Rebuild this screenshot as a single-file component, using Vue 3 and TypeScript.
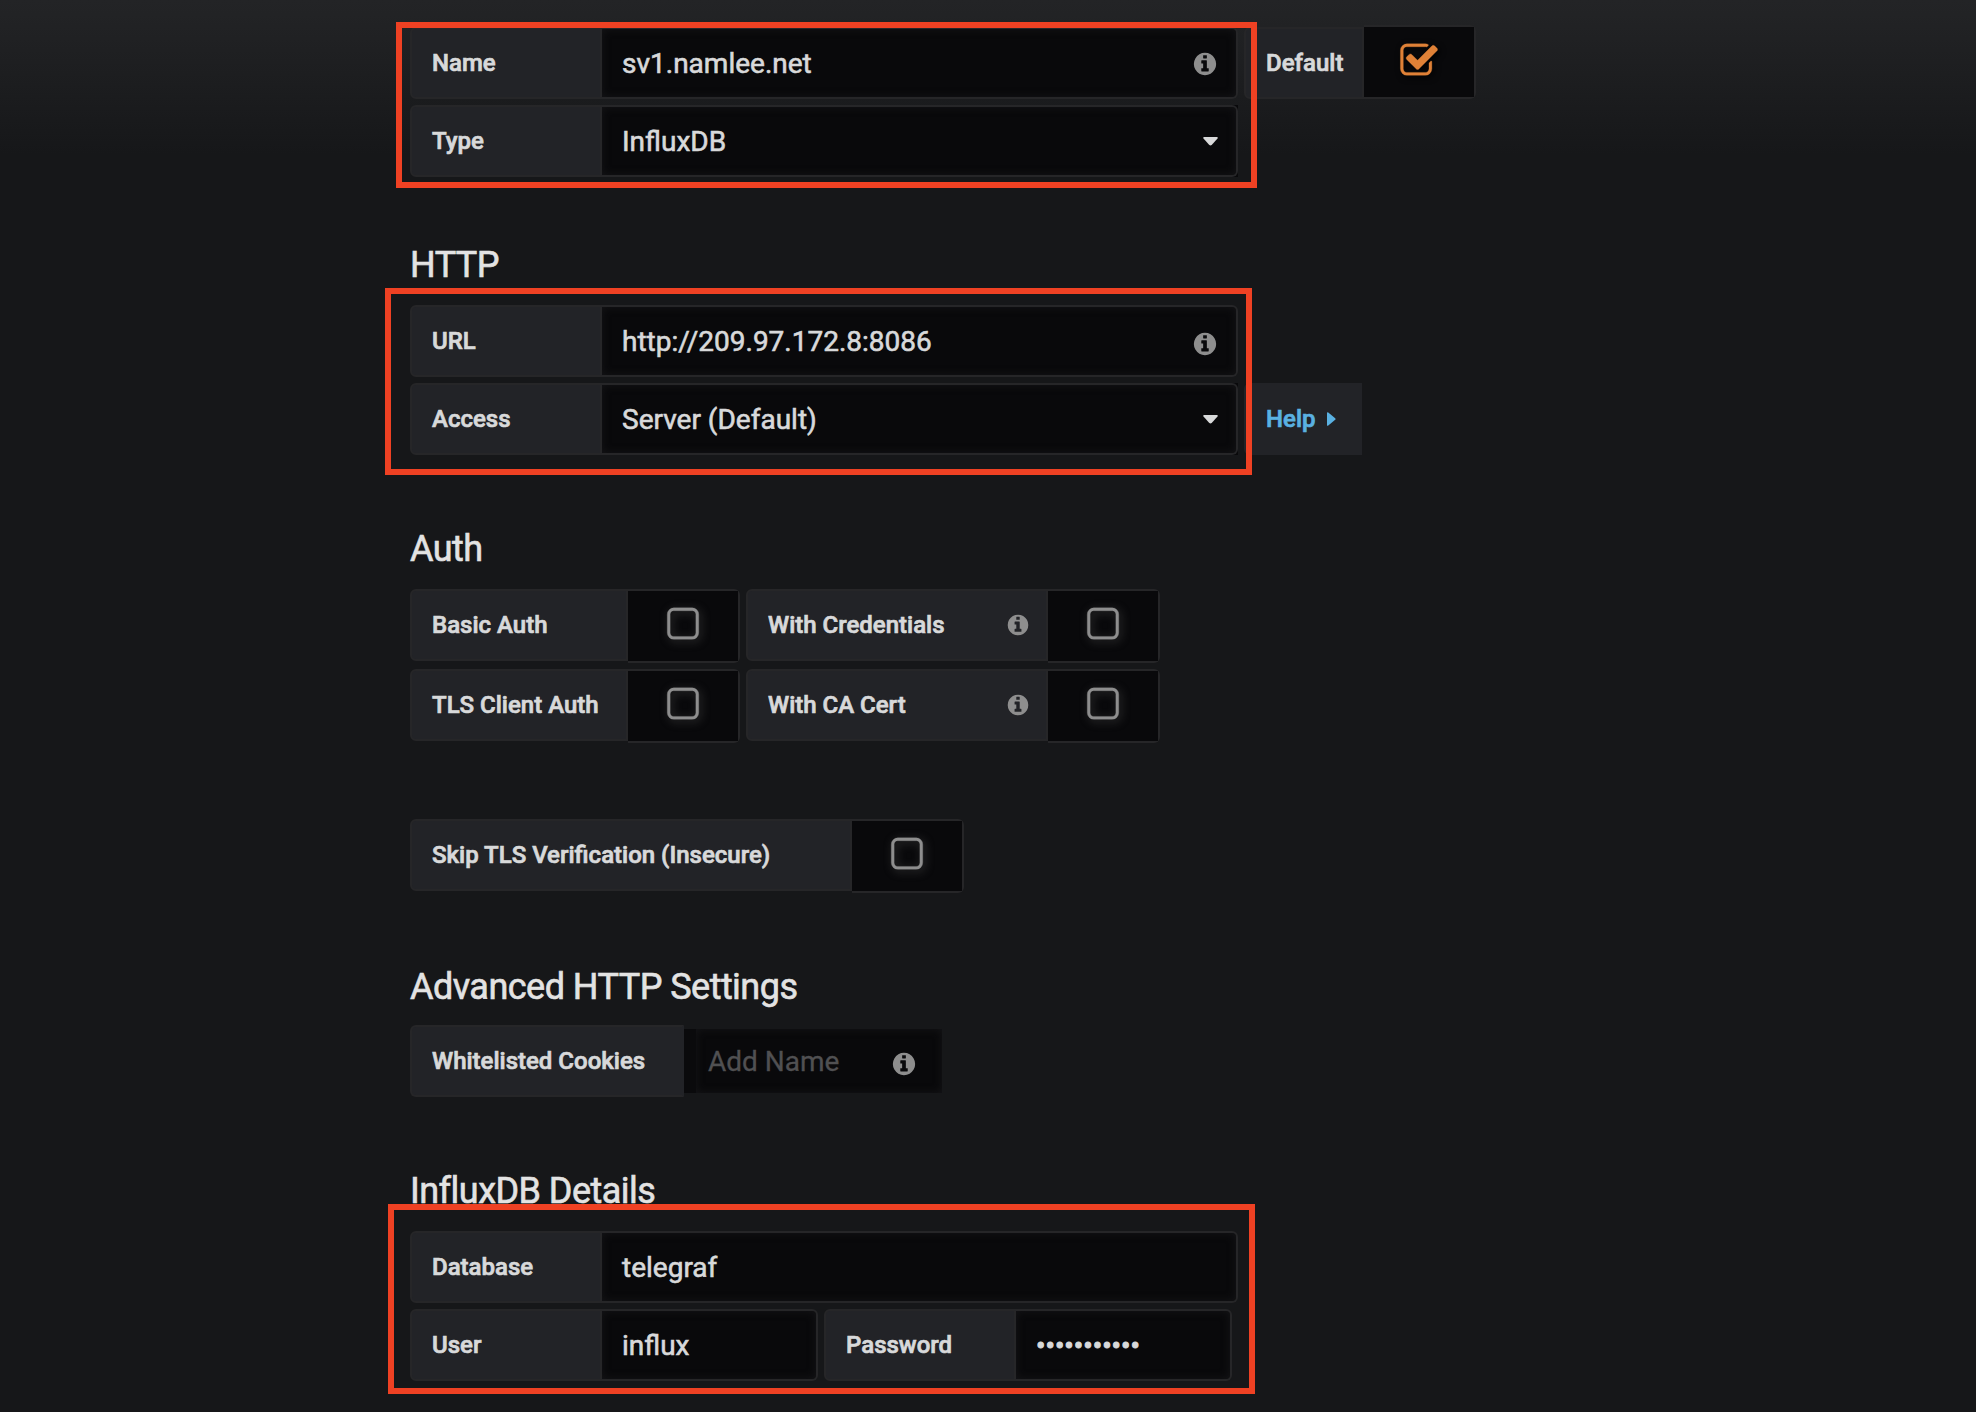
<script setup lang="ts">
interface Toggle {
  label: string
  size: string
  hint?: boolean
}

const authRows: Toggle[][] = [
  [
    { label: 'Basic Auth', size: 'w-218' },
    { label: 'With Credentials', size: 'w-302', hint: true },
  ],
  [
    { label: 'TLS Client Auth', size: 'w-218' },
    { label: 'With CA Cert', size: 'w-302', hint: true },
  ],
]

const password = '•'.repeat(11)

const infoPath =
  'M1152 1376v-160q0-14-9-23t-23-9h-96v-512q0-14-9-23t-23-9h-320q-14 0-23 9t-9 23v160q0 14 9 23t23 9h96v320h-96q-14 0-23 9t-9 23v160q0 14 9 23t23 9h448q14 0 23-9t9-23zm-128-896v-160q0-14-9-23t-23-9h-192q-14 0-23 9t-9 23v160q0 14 9 23t23 9h192q14 0 23-9t9-23zm640 416q0 209-103 385.5t-279.5 279.5-385.5 103-385.5-103-279.5-279.5-103-385.5 103-385.5 279.5-279.5 385.5-103 385.5 103 279.5 279.5 103 385.5z'
const squarePath =
  'M1312 256h-832q-66 0-113 47t-47 113v832q0 66 47 113t113 47h832q66 0 113-47t47-113v-832q0-66-47-113t-113-47zm288 160v832q0 119-84.5 203.5t-203.5 84.5h-832q-119 0-203.5-84.5t-84.5-203.5v-832q0-119 84.5-203.5t203.5-84.5h832q119 0 203.5 84.5t84.5 203.5z'
const checkPath =
  'M1472 930v318q0 119-84.5 203.5t-203.5 84.5h-832q-119 0-203.5-84.5t-84.5-203.5v-832q0-119 84.5-203.5t203.5-84.5h832q63 0 117 25 15 7 18 23 3 17-9 29l-49 49q-10 10-23 10-3 0-9-2-23-6-45-6h-832q-66 0-113 47t-47 113v832q0 66 47 113t113 47h832q66 0 113-47t47-113v-254q0-13 9-22l64-64q10-10 23-10 6 0 12 3 20 8 20 29zm231-489l-814 814q-24 24-57 24t-57-24l-430-430q-24-24-24-57t24-57l110-110q24-24 57-24t57 24l263 263 647-647q24-24 57-24t57 24l110 110q24 24 24 57t-24 57z'
const caretPath = 'M1.2 0h12.6q1.6.3.7 1.6L8.7 8.1q-1.2.9-2.4 0L.5 1.6Q-.4.3 1.2 0z'
</script>

<template>
  <main class="page">
    <section class="group group-source">
      <div class="row row-first">
        <div class="field">
          <label class="label w-192">Name</label>
          <div class="input w-636">
            <span class="value">sv1.namlee.net</span>
            <svg class="info" viewBox="0 0 1792 1792"><path :d="infoPath" /></svg>
          </div>
        </div>
        <div class="field field-switch">
          <label class="label w-120">Default</label>
          <div class="switch">
            <div class="switch-face">
              <svg class="check on" viewBox="0 0 1792 1792"><path :d="checkPath" /></svg>
            </div>
          </div>
        </div>
      </div>
      <div class="row">
        <div class="field">
          <label class="label w-192">Type</label>
          <div class="select-wrap">
            <div class="input w-636">
              <span class="value">InfluxDB</span>
              <svg class="caret" viewBox="0 0 15 9"><path :d="caretPath" /></svg>
            </div>
          </div>
        </div>
      </div>
      <div class="mark mark-source"></div>
    </section>

    <section class="group">
      <h3 class="heading">HTTP</h3>
      <div class="row">
        <div class="field">
          <label class="label w-192">URL</label>
          <div class="input w-636">
            <span class="value">http://209.97.172.8:8086</span>
            <svg class="info low" viewBox="0 0 1792 1792"><path :d="infoPath" /></svg>
          </div>
        </div>
      </div>
      <div class="row">
        <div class="field">
          <label class="label w-192">Access</label>
          <div class="select-wrap">
            <div class="input w-636">
              <span class="value">Server (Default)</span>
              <svg class="caret" viewBox="0 0 15 9"><path :d="caretPath" /></svg>
            </div>
          </div>
        </div>
        <a class="label help">
          <span>Help</span>
          <svg class="caret-right" viewBox="0 0 9 14"><path d="M0 .8Q.2-.3 1.3.5L8.2 6.2q.8.8 0 1.6L1.3 13.5Q.2 14.3 0 13.2z" /></svg>
        </a>
      </div>
      <div class="mark mark-http"></div>
    </section>

    <section class="group group-auth">
      <h3 class="heading">Auth</h3>
      <div v-for="(row, i) in authRows" :key="i" class="row">
        <div v-for="item in row" :key="item.label" class="field">
          <label class="label" :class="item.size">
            <span>{{ item.label }}</span>
            <svg v-if="item.hint" class="hint" viewBox="0 0 1792 1792"><path :d="infoPath" /></svg>
          </label>
          <div class="switch">
            <div class="switch-face">
              <svg class="check" viewBox="0 0 1792 1792"><path :d="squarePath" /></svg>
            </div>
          </div>
        </div>
      </div>
    </section>

    <section class="group">
      <div class="row">
        <div class="field">
          <label class="label w-442">Skip TLS Verification (Insecure)</label>
          <div class="switch">
            <div class="switch-face">
              <svg class="check" viewBox="0 0 1792 1792"><path :d="squarePath" /></svg>
            </div>
          </div>
        </div>
      </div>
    </section>

    <section class="group">
      <h3 class="heading heading-tight">Advanced HTTP Settings</h3>
      <div class="row">
        <div class="field field-tags">
          <label class="label label-flat w-274">Whitelisted Cookies</label>
          <div class="tags">
            <div class="tag-input">
              <span class="value placeholder">Add Name</span>
              <svg class="info low" viewBox="0 0 1792 1792"><path :d="infoPath" /></svg>
            </div>
          </div>
        </div>
      </div>
    </section>

    <section class="group">
      <h3 class="heading">InfluxDB Details</h3>
      <div class="row">
        <div class="field">
          <label class="label w-192">Database</label>
          <div class="input w-636"><span class="value">telegraf</span></div>
        </div>
      </div>
      <div class="row">
        <div class="field">
          <label class="label w-192">User</label>
          <div class="input w-216"><span class="value">influx</span></div>
        </div>
        <div class="field">
          <label class="label w-192">Password</label>
          <div class="input w-216"><span class="value dots">{{ password }}</span></div>
        </div>
      </div>
      <div class="mark mark-details"></div>
    </section>
  </main>
</template>

<style>
html,
body {
  margin: 0;
  background: #161719;
}
</style>

<style scoped>
.page {
  box-sizing: border-box;
  width: 1976px;
  height: 1412px;
  padding: 25px 0 0 410px;
  overflow: hidden;
  background: linear-gradient(180deg, #232426 0, #222325 15px, #161719 155px);
  color: #d8d9da;
  font-family: Roboto, 'Liberation Sans', sans-serif;
}
.page * {
  box-sizing: border-box;
}
.group {
  position: relative;
  margin-bottom: 73px;
}
.group-source {
  margin-bottom: 67px;
}
.group-auth {
  margin-bottom: 76px;
}
.heading {
  margin: 0 0 19px;
  font-size: 36px;
  line-height: 42px;
  font-weight: 400;
  letter-spacing: -0.53px;
  color: #e3e3e3;
  -webkit-text-stroke: 0.6px #e3e3e3;
}
.heading-tight {
  margin-bottom: 17px;
}
.row {
  display: flex;
  align-items: flex-start;
  gap: 6px;
}
.row + .row {
  margin-top: 6px;
}
.row-first {
  align-items: flex-end;
}
.field {
  display: flex;
  align-items: flex-start;
}
.field-switch {
  align-items: flex-end;
}
.field-tags {
  align-items: center;
}
.label {
  display: flex;
  align-items: center;
  justify-content: space-between;
  height: 72px;
  padding: 0 18px 0 20px;
  border: 2px solid #262628;
  border-radius: 6px 0 0 6px;
  background: #222327;
  font-size: 24px;
  line-height: 36px;
  font-weight: 500;
  white-space: nowrap;
  -webkit-text-stroke: 0.7px currentColor;
}
.label-flat {
  border-right-color: #222327;
}
.w-120 { width: 120px; }
.w-192 { width: 192px; }
.w-216 { width: 216px; }
.w-218 { width: 218px; }
.w-274 { width: 274px; }
.w-302 { width: 302px; }
.w-442 { width: 442px; }
.w-636 { width: 636px; }
.input {
  display: flex;
  align-items: center;
  justify-content: space-between;
  height: 72px;
  padding: 0 18px 0 20px;
  border: 2px solid #262628;
  border-left: 0;
  border-radius: 0 6px 6px 0;
  background: #09090b;
  box-shadow: inset 0 0 8px #161618;
}
.select-wrap {
  background: #09090b;
}
.value {
  padding-top: 2px;
  font-size: 28px;
  line-height: 40px;
  white-space: nowrap;
  -webkit-text-stroke: 0.6px currentColor;
}
.info {
  position: relative;
  top: 1px;
  width: 26px;
  height: 26px;
  fill: #8e8e8e;
}
.info.low {
  top: 3px;
}
.hint {
  width: 24px;
  height: 24px;
  margin-right: -2px;
  fill: #8e8e8e;
}
.caret {
  width: 15px;
  height: 9px;
  fill: #d8d9da;
}
.switch {
  width: 112px;
  height: 74px;
  padding: 2px 2px 2px 0;
  border-radius: 0 6px 6px 0;
  background: #262628;
}
.switch-face {
  display: flex;
  justify-content: center;
  height: 70px;
  padding-top: 14px;
  background: #09090b;
}
.check {
  width: 40px;
  height: 40px;
  fill: #8e8e8e;
  stroke: #8e8e8e;
  stroke-width: 14;
  filter: drop-shadow(2px 2px 4px #383838);
}
.check.on {
  fill: #df8137;
  stroke: #df8137;
  filter: drop-shadow(2px 2px 3px #000);
}
.help {
  width: 118px;
  justify-content: flex-start;
  gap: 11px;
  border-color: #222327;
  color: #5ab1e2;
}
.caret-right {
  width: 9px;
  height: 14px;
  fill: #5ab1e2;
  stroke: none;
}
.tags {
  display: flex;
  height: 64px;
  padding-left: 12px;
  background: #0a0a0c;
}
.tag-input {
  display: flex;
  align-items: center;
  justify-content: space-between;
  width: 246px;
  padding: 0 25px 0 12px;
  background: #09090b;
  box-shadow: inset 0 0 8px #161618;
}
.placeholder {
  color: #505052;
  -webkit-text-stroke-width: 0.3px;
}
.dots {
  -webkit-text-stroke-width: 1px;
}
.mark {
  position: absolute;
  border: 6px solid #ef4123;
  pointer-events: none;
}
.mark-source {
  left: -14px;
  top: -3px;
  width: 861px;
  height: 166px;
}
.mark-http {
  left: -25px;
  top: 44px;
  width: 867px;
  height: 187px;
}
.mark-details {
  left: -22px;
  top: 34px;
  width: 867px;
  height: 190px;
}
</style>
